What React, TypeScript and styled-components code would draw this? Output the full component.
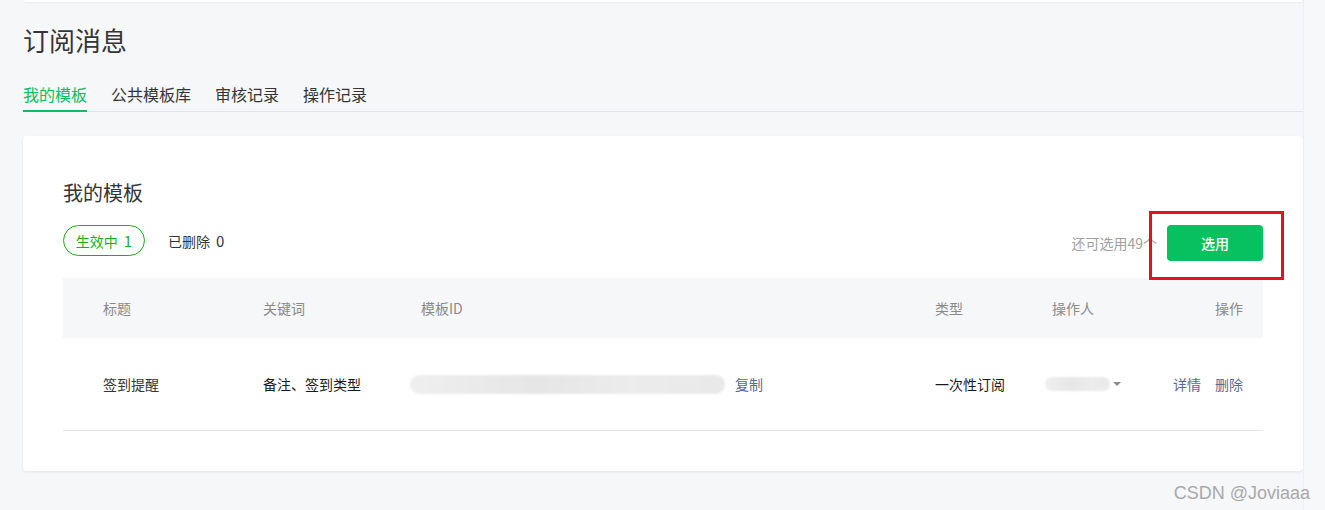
import React from 'react';
import styled, { createGlobalStyle } from 'styled-components';

const GlobalStyle = createGlobalStyle`
  html, body {
    margin: 0;
    padding: 0;
    background: #f6f7f9;
    font-family: 'Noto Sans CJK SC', 'Noto Sans', sans-serif;
    color: #353535;
  }
`;

const Page = styled.div`
  position: relative;
  display: flex;
  width: 1325px;
  height: 510px;
  overflow: hidden;
  background: #f6f7f9;
`;

const Main = styled.div`
  width: 1280px;
  padding-left: 23px;
  flex-shrink: 0;
`;

const SideStrip = styled.div`
  flex: 1;
  border-left: 1px solid #eceef1;
  background: #f7f8fa;
`;

const PrevCardEdge = styled.div`
  height: 2px;
  margin-left: 1px;
  margin-right: 1px;
  background: #fff;
  box-shadow: 0 1px 2px rgba(0, 0, 0, 0.06);
  border-radius: 0 0 4px 4px;
`;

const PageTitle = styled.h1`
  margin: 20px 0 0;
  font-size: 26px;
  line-height: 36px;
  font-weight: 400;
  color: #353535;
`;

const Tabs = styled.nav`
  display: flex;
  gap: 24px;
  margin-top: 24px;
  border-bottom: 1px solid #e2e3e6;
`;

const Tab = styled.span<{ $active?: boolean }>`
  font-size: 16px;
  line-height: 24px;
  padding-bottom: 4px;
  margin-bottom: -1px;
  color: ${(p) => (p.$active ? '#07c160' : '#353535')};
  border-bottom: 2px solid ${(p) => (p.$active ? '#07c160' : 'transparent')};
`;

const Card = styled.section`
  margin-top: 24px;
  background: #fff;
  border-radius: 4px;
  box-shadow: 0 1px 3px rgba(0, 0, 0, 0.08);
  padding: 40px 40px 40px;
`;

const CardTitle = styled.h2`
  margin: 0;
  font-size: 20px;
  line-height: 34px;
  font-weight: 400;
  color: #353535;
`;

const Toolbar = styled.div`
  display: flex;
  justify-content: space-between;
  align-items: flex-start;
  margin-top: 15px;
  height: 36px;
`;

const Filters = styled.div`
  display: flex;
  align-items: center;
  gap: 23px;
`;

const Pill = styled.span`
  display: inline-flex;
  align-items: center;
  justify-content: center;
  box-sizing: border-box;
  width: 82px;
  height: 31px;
  border: 1px solid #1aad19;
  border-radius: 16px;
  color: #1aad19;
  font-size: 14px;
`;

const FilterText = styled.span`
  font-size: 14px;
  color: #353535;
`;

const Count = styled.span`
  margin-left: 6px;
  font-size: 15px;
`;

const Actions = styled.div`
  position: relative;
  display: flex;
  align-items: center;
  gap: 10px;
  height: 36px;
`;

const Quota = styled.span`
  font-size: 14px;
  color: #a0a0a0;
`;

const PrimaryButton = styled.button`
  width: 96px;
  height: 36px;
  border: none;
  border-radius: 4px;
  background: #07c160;
  color: #fff;
  font-family: inherit;
  font-size: 14px;
  font-weight: 500;
  cursor: pointer;
`;

// red annotation frame drawn over the button
const Highlight = styled.div`
  position: absolute;
  right: -21px;
  top: -14px;
  width: 135px;
  height: 69px;
  box-sizing: border-box;
  border: 3px solid #e0141e;
  pointer-events: none;
`;

const Table = styled.div`
  margin-top: 17px;
`;

const Row = styled.div<{ $head?: boolean }>`
  display: grid;
  grid-template-columns: 160px 158px 514px 117px 131px 120px;
  align-items: center;
  height: ${(p) => (p.$head ? '60px' : '92px')};
  background: ${(p) => (p.$head ? '#f6f7f9' : '#fff')};
  border-bottom: ${(p) => (p.$head ? 'none' : '1px solid #e7e7e7')};
  font-size: 14px;
  color: ${(p) => (p.$head ? '#8a8a8a' : '#353535')};
`;

const Cell = styled.div<{ $right?: boolean; $dark?: boolean }>`
  display: flex;
  align-items: center;
  justify-content: ${(p) => (p.$right ? 'flex-end' : 'flex-start')};
  padding: ${(p) => (p.$right ? '0 20px 0 0' : '0 0 0 40px')};
  color: ${(p) => (p.$dark ? '#1a1a1a' : 'inherit')};
  gap: 14px;
`;

const Blur = styled.span<{ $w: number; $h: number; $shift: number }>`
  display: inline-block;
  width: ${(p) => p.$w}px;
  height: ${(p) => p.$h}px;
  margin-left: -${(p) => p.$shift}px;
  border-radius: ${(p) => p.$h / 2}px;
  background: linear-gradient(90deg, #efefef, #e6e6e6 40%, #ececec 70%, #e9e9e9);
  filter: blur(1px);
`;

const IdWrap = styled.span`
  display: inline-flex;
  align-items: center;
  gap: 10px;
`;

const Link = styled.a`
  color: #576b95;
  text-decoration: none;
  cursor: pointer;
`;

const Caret = styled.span`
  width: 0;
  height: 0;
  margin-left: -11px;
  border-left: 4px solid transparent;
  border-right: 4px solid transparent;
  border-top: 4px solid #8c8c8c;
`;

const Watermark = styled.div`
  position: absolute;
  right: 15px;
  bottom: 6px;
  font-family: 'Liberation Sans', Arial, sans-serif;
  font-size: 18px;
  color: #a9a9a9;
`;

const App: React.FC = () => {
  return (
    <Page>
      <GlobalStyle />
      <Main>
        <PrevCardEdge />
        <PageTitle>订阅消息</PageTitle>
        <Tabs>
          <Tab $active>我的模板</Tab>
          <Tab>公共模板库</Tab>
          <Tab>审核记录</Tab>
          <Tab>操作记录</Tab>
        </Tabs>

        <Card>
          <CardTitle>我的模板</CardTitle>
          <Toolbar>
            <Filters>
              <Pill>
                生效中<Count>1</Count>
              </Pill>
              <FilterText>
                已删除<Count>0</Count>
              </FilterText>
            </Filters>
            <Actions>
              <Quota>还可选用49个</Quota>
              <PrimaryButton>选用</PrimaryButton>
              <Highlight />
            </Actions>
          </Toolbar>

          <Table>
            <Row $head>
              <Cell>标题</Cell>
              <Cell>关键词</Cell>
              <Cell>模板ID</Cell>
              <Cell>类型</Cell>
              <Cell>操作人</Cell>
              <Cell $right>操作</Cell>
            </Row>
            <Row>
              <Cell>签到提醒</Cell>
              <Cell $dark>备注、签到类型</Cell>
              <Cell>
                <IdWrap>
                  <Blur $w={315} $h={19} $shift={11} />
                  <Link>复制</Link>
                </IdWrap>
              </Cell>
              <Cell $dark>一次性订阅</Cell>
              <Cell>
                <Blur $w={65} $h={14} $shift={7} />
                <Caret />
              </Cell>
              <Cell $right>
                <Link>详情</Link>
                <Link>删除</Link>
              </Cell>
            </Row>
          </Table>
        </Card>
      </Main>
      <SideStrip />
      <Watermark>CSDN @Joviaaa</Watermark>
    </Page>
  );
};

export default App;
